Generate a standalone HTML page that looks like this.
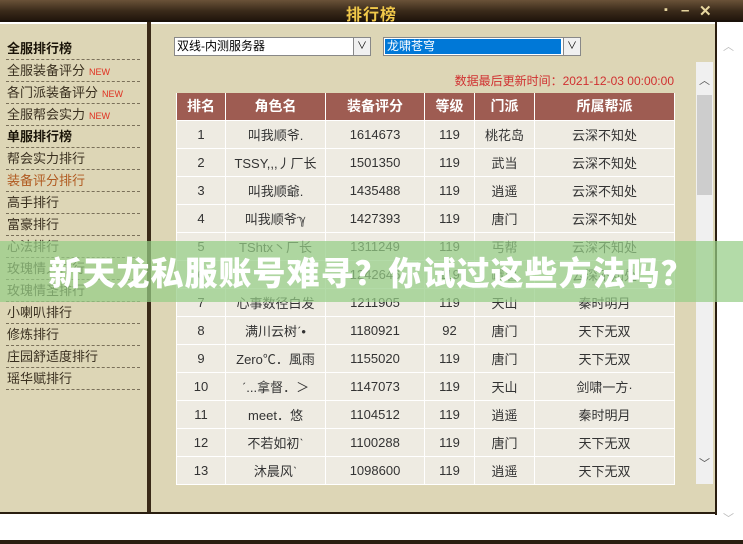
<!DOCTYPE html>
<html><head><meta charset="utf-8"><style>
*{margin:0;padding:0;box-sizing:border-box}
body{width:743px;height:544px;overflow:hidden;background:#fff;font-family:"Liberation Sans","Noto Sans CJK SC",sans-serif;position:relative}
.title{position:absolute;left:0;top:0;width:743px;height:22px;background:linear-gradient(#6a5238,#3a2a1a 55%,#22170d);border-bottom:2px solid #1a120a}
.title .t{position:absolute;left:0;width:743px;text-align:center;top:1px;color:#f0c84a;font-weight:bold;font-size:16px;letter-spacing:1px}
.title .ic{position:absolute;top:2px;color:#e8d7a0;font-weight:bold;font-size:15px}
.left{position:absolute;left:0;top:24px;width:148px;height:489px;background:#ddd6b6}
.vdiv{position:absolute;left:147px;top:22px;width:4px;height:491px;background:#3a2a18}
.right{position:absolute;left:151px;top:24px;width:565px;height:489px;background:#ddd6b6}
.rb{position:absolute;left:715px;top:22px;width:2px;height:493px;background:#2a1e10}
.bot{position:absolute;left:0;top:512px;width:717px;height:2px;background:#2a1e10}
.bot2{position:absolute;left:0;top:540px;width:743px;height:4px;background:#2a1e10}
.menu{position:absolute;left:6px;top:38px;width:134px}
.menu div{height:22px;line-height:21px;font-size:13px;color:#3a3020;border-bottom:1px dashed #7a705a;padding-left:1px;white-space:nowrap}
.menu b{font-weight:bold;color:#1a1408}
.menu .n{color:#e03020;font-size:9px;margin-left:4px}
.sel{position:absolute;top:37px;height:19px;border:1px solid #888;background:#fff;font-size:12px;line-height:17px;padding-left:2px}
.sel .a{position:absolute;right:0;top:0;width:17px;height:17px;border-left:1px solid #888;background:#f0f0f0;text-align:center;font-size:10px;line-height:17px}
.time{position:absolute;left:380px;top:72px;width:294px;text-align:right;color:#d03030;font-size:12px}
table{position:absolute;left:176px;top:93px;border-collapse:collapse;font-size:13px;color:#333}
td,th{border:1px solid #fff;text-align:center;height:28px;padding:0}
th{background:#9e5c52;color:#fff;font-size:14px;height:27px;border-top:none}
td{background:#eeebe2}
.sb{position:absolute;left:696px;top:62px;width:17px;height:422px;background:#f0f0f0}
.thumb{position:absolute;left:697px;top:95px;width:15px;height:100px;background:#cdcdcd}
.banner{position:absolute;left:0;top:241px;width:743px;height:61px;background:rgba(150,205,135,0.72)}
.banner div{text-align:center;color:#fff;font-weight:900;font-size:33px;line-height:61px;font-family:"Noto Sans CJK SC",sans-serif;letter-spacing:1px}
</style></head><body>
<div class="title"><div class="t">排行榜</div><span class="ic" style="left:664px;font-size:11px;top:4px">▪</span><span class="ic" style="left:681px">–</span><span class="ic" style="left:699px">✕</span></div>
<div class="left"></div><div class="vdiv"></div><div class="right"></div><div class="rb"></div><div class="bot"></div><div class="bot2"></div>
<div class="menu">
<div><b>全服排行榜</b></div>
<div>全服装备评分<span class="n">NEW</span></div>
<div>各门派装备评分<span class="n">NEW</span></div>
<div>全服帮会实力<span class="n">NEW</span></div>
<div><b>单服排行榜</b></div>
<div>帮会实力排行</div>
<div style="color:#b05a20">装备评分排行</div>
<div>高手排行</div><div>富豪排行</div><div>心法排行</div><div>玫瑰情人排行</div><div>玫瑰情圣排行</div><div>小喇叭排行</div><div>修炼排行</div><div>庄园舒适度排行</div><div>瑶华赋排行</div>
</div>
<div class="sel" style="left:174px;width:197px">双线-内测服务器<div class="a">∨</div></div>
<div class="sel" style="left:383px;width:198px;padding:1px"><div style="background:#0078d7;color:#fff;height:15px;line-height:15px;width:176px;padding-left:2px">龙啸苍穹</div><div class="a">∨</div></div>
<div class="time">数据最后更新时间：2021-12-03 00:00:00</div>
<table>
<tr><th style="width:49px">排名</th><th style="width:100px">角色名</th><th style="width:99px">装备评分</th><th style="width:50px">等级</th><th style="width:60px">门派</th><th style="width:140px">所属帮派</th></tr>
<tr><td>1</td><td>叫我顺爷.</td><td>1614673</td><td>119</td><td>桃花岛</td><td>云深不知处</td></tr>
<tr><td>2</td><td>TSSY,,,丿厂长</td><td>1501350</td><td>119</td><td>武当</td><td>云深不知处</td></tr>
<tr><td>3</td><td>叫我顺爺.</td><td>1435488</td><td>119</td><td>逍遥</td><td>云深不知处</td></tr>
<tr><td>4</td><td>叫我顺爷ℽ</td><td>1427393</td><td>119</td><td>唐门</td><td>云深不知处</td></tr>
<tr><td>5</td><td>TShtx丶厂长</td><td>1311249</td><td>119</td><td>丐帮</td><td>云深不知处</td></tr>
<tr><td>6</td><td>...</td><td>1242646</td><td>119</td><td>峨眉</td><td>云深不知处</td></tr>
<tr><td>7</td><td>心事数径白发</td><td>1211905</td><td>119</td><td>天山</td><td>秦时明月</td></tr>
<tr><td>8</td><td>满川云树ˊ•</td><td>1180921</td><td>92</td><td>唐门</td><td>天下无双</td></tr>
<tr><td>9</td><td>Zero℃．風雨</td><td>1155020</td><td>119</td><td>唐门</td><td>天下无双</td></tr>
<tr><td>10</td><td>ˊ...拿督．＞</td><td>1147073</td><td>119</td><td>天山</td><td>剑啸一方·</td></tr>
<tr><td>11</td><td>meet．悠</td><td>1104512</td><td>119</td><td>逍遥</td><td>秦时明月</td></tr>
<tr><td>12</td><td>不若如初ˋ</td><td>1100288</td><td>119</td><td>唐门</td><td>天下无双</td></tr>
<tr><td>13</td><td>沐晨风ˋ</td><td>1098600</td><td>119</td><td>逍遥</td><td>天下无双</td></tr>
</table>
<div class="sb"></div><div class="thumb"></div>
<div style="position:absolute;left:699px;top:72px;font-size:11px;color:#555">︿</div>
<div style="position:absolute;left:699px;top:455px;font-size:11px;color:#555">﹀</div>
<div style="position:absolute;left:723px;top:38px;font-size:11px;color:#bbb">︿</div>
<div style="position:absolute;left:723px;top:510px;font-size:11px;color:#bbb">﹀</div>
<div class="banner"><div>新天龙私服账号难寻？你试过这些方法吗？</div></div>
</body></html>
